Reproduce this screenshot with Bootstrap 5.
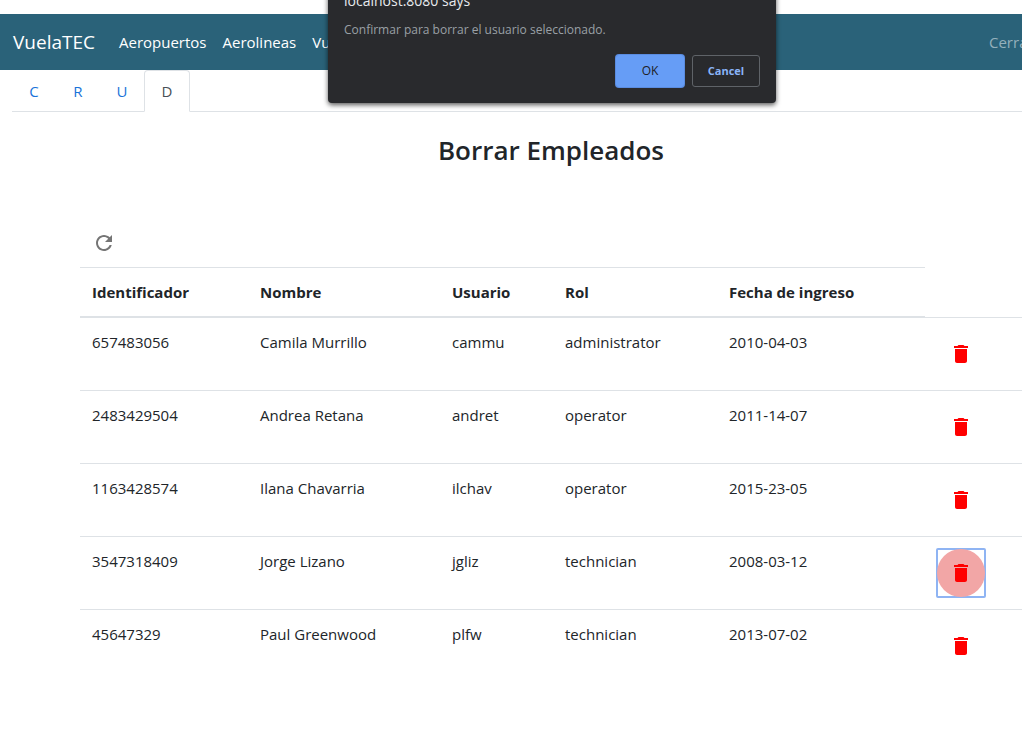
<!DOCTYPE html>
<html lang="es">
<head>
<meta charset="utf-8">
<meta name="viewport" content="width=device-width, initial-scale=1">
<title>VuelaTEC</title>
<link href="https://cdn.jsdelivr.net/npm/bootstrap@5.3.0/dist/css/bootstrap.min.css" rel="stylesheet">
<style>
  body { font-family: "Open Sans", "Noto Sans", sans-serif; font-size: 15px; line-height: 24px; color: #212529; overflow-x: hidden; }
  .site-bar { background: #2a6279; height: 56px; margin-top: 14px; padding-left: 13px; overflow: hidden; }
  .site-bar .navbar-brand { font-size: 19px; color: #fff; margin-right: 16px; padding: 0; }
  .site-bar .nav-link { color: #fff; padding: 8px; white-space: nowrap; }
  .site-bar .session { color: #94b0bc; flex: 0 0 33px; min-width: 0; padding: 8px 0; }
  .crud-tabs { margin-left: 12px; }
  .crud-tabs .nav-link { min-width: 44px; padding: 8px 0; text-align: center; color: #1a73d9; border-radius: 4px 4px 0 0; }
  .crud-tabs .nav-link.active { min-width: 46px; color: #495057; }
  .sheet { padding-left: 80px; }
  .sheet h1 { font-size: 26px; line-height: 32px; font-weight: 600; margin: 22px 0 53px; }
  .round-btn { width: 48px; height: 48px; padding: 12px; border: 0; border-radius: 50%; background: transparent; display: block; line-height: 0; }
  .round-btn svg { width: 24px; height: 24px; }
  .refresh { color: #757575; }
  .trash { color: #f00; }
  .focus-frame { width: 50px; height: 50px; margin: -1px; border: 2px solid #8fb4f3; border-radius: 2px; }
  .focus-frame .trash { margin: -1px; background: #f2a6a6; }
  .staff { table-layout: fixed; color: #212529; margin: 0; }
  .staff > :not(caption) > * > * { padding: 12px; border-width: 0; white-space: nowrap; background: transparent; }
  .staff thead th { border-top: 1px solid #dee2e6; border-bottom: 2px solid #dee2e6; font-weight: 700; }
  .staff tbody td { border-top: 1px solid #dee2e6; }
  .c-id { width: 168px; } .c-name { width: 192px; } .c-user { width: 113px; } .c-role { width: 164px; } .c-date { width: 208px; }
  .prompt { position: absolute; top: -25px; left: 328px; width: 448px; padding: 16px; background: #292a2d; border-radius: 0 0 4px 4px; box-shadow: 0 2px 5px rgba(0,0,0,.65); color: #9aa0a6; font-size: 12px; line-height: 16px; z-index: 10; }
  .prompt h2 { font-size: 14px; line-height: 20px; font-weight: 400; color: #e8eaed; margin: 0 0 11px; }
  .prompt p { margin: 0 0 17px; }
  .prompt .btn { width: 68px; height: 32px; padding: 0; font-size: 11px; border-radius: 3px; line-height: 16px; }
  .prompt .btn-accept { background: #669df6; border-color: #669df6; color: #202124; font-size: 12px; box-shadow: 0 0 0 1px #5a8ce0; }
  .btn-dismiss { background: transparent; border-color: #5f6368; color: #8ab4f8; font-weight: 700; }
</style>
</head>
<body>
<svg class="d-none" xmlns="http://www.w3.org/2000/svg">
  <symbol id="bin" viewBox="0 0 24 24"><path fill="currentColor" d="M6 19c0 1.100.900 2 2 2h8c1.100 0 2-.9 2-2V7H6v12zM19 4h-3.500l-1-1h-5l-1 1H5v2h14V4z"/></symbol>
</svg>

<nav class="site-bar d-flex align-items-center">
  <a class="navbar-brand" href="#">VuelaTEC</a>
  <a class="nav-link" href="#">Aeropuertos</a>
  <a class="nav-link" href="#">Aerolineas</a>
  <a class="nav-link" href="#">Vuelos</a>
  <a class="nav-link session ms-auto" href="#">Cerrar</a>
</nav>

<ul class="nav nav-tabs crud-tabs">
  <li class="nav-item"><a class="nav-link" href="#">C</a></li>
  <li class="nav-item"><a class="nav-link" href="#">R</a></li>
  <li class="nav-item"><a class="nav-link" href="#">U</a></li>
  <li class="nav-item"><a class="nav-link active" aria-current="page" href="#">D</a></li>
</ul>

<main class="sheet">
  <h1 class="text-center">Borrar Empleados</h1>
  <button type="button" class="round-btn refresh" aria-label="Actualizar">
    <svg viewBox="0 0 24 24"><path fill="currentColor" d="M17.650 6.350C16.200 4.900 14.210 4 12 4c-4.420 0-7.990 3.580-7.990 8s3.570 8 7.990 8c3.730 0 6.840-2.550 7.730-6h-2.080c-.82 2.330-3.040 4-5.650 4-3.310 0-6-2.690-6-6s2.690-6 6-6c1.660 0 3.140.690 4.220 1.780L13 11h7V4l-2.350 2.350z"/></svg>
  </button>
  <table class="table staff">
    <colgroup><col class="c-id"><col class="c-name"><col class="c-user"><col class="c-role"><col class="c-date"><col></colgroup>
    <thead>
      <tr><th scope="col">Identificador</th><th scope="col">Nombre</th><th scope="col">Usuario</th><th scope="col">Rol</th><th scope="col">Fecha de ingreso</th></tr>
    </thead>
    <tbody>
      <tr><td>657483056</td><td>Camila Murrillo</td><td>cammu</td><td>administrator</td><td>2010-04-03</td>
        <td><button type="button" class="round-btn trash" aria-label="Borrar"><svg><use href="#bin"/></svg></button></td></tr>
      <tr><td>2483429504</td><td>Andrea Retana</td><td>andret</td><td>operator</td><td>2011-14-07</td>
        <td><button type="button" class="round-btn trash" aria-label="Borrar"><svg><use href="#bin"/></svg></button></td></tr>
      <tr><td>1163428574</td><td>Ilana Chavarria</td><td>ilchav</td><td>operator</td><td>2015-23-05</td>
        <td><button type="button" class="round-btn trash" aria-label="Borrar"><svg><use href="#bin"/></svg></button></td></tr>
      <tr><td>3547318409</td><td>Jorge Lizano</td><td>jgliz</td><td>technician</td><td>2008-03-12</td>
        <td><div class="focus-frame"><button type="button" class="round-btn trash" aria-label="Borrar"><svg><use href="#bin"/></svg></button></div></td></tr>
      <tr><td>45647329</td><td>Paul Greenwood</td><td>plfw</td><td>technician</td><td>2013-07-02</td>
        <td><button type="button" class="round-btn trash" aria-label="Borrar"><svg><use href="#bin"/></svg></button></td></tr>
    </tbody>
  </table>
</main>

<div class="prompt" role="dialog" aria-labelledby="prompt-title">
  <h2 id="prompt-title">localhost:8080 says</h2>
  <p>Confirmar para borrar el usuario seleccionado.</p>
  <div class="d-flex justify-content-end gap-2">
    <button type="button" class="btn btn-accept">OK</button>
    <button type="button" class="btn btn-dismiss">Cancel</button>
  </div>
</div>
<script src="https://cdn.jsdelivr.net/npm/bootstrap@5.3.0/dist/js/bootstrap.bundle.min.js"></script>
</body>
</html>
